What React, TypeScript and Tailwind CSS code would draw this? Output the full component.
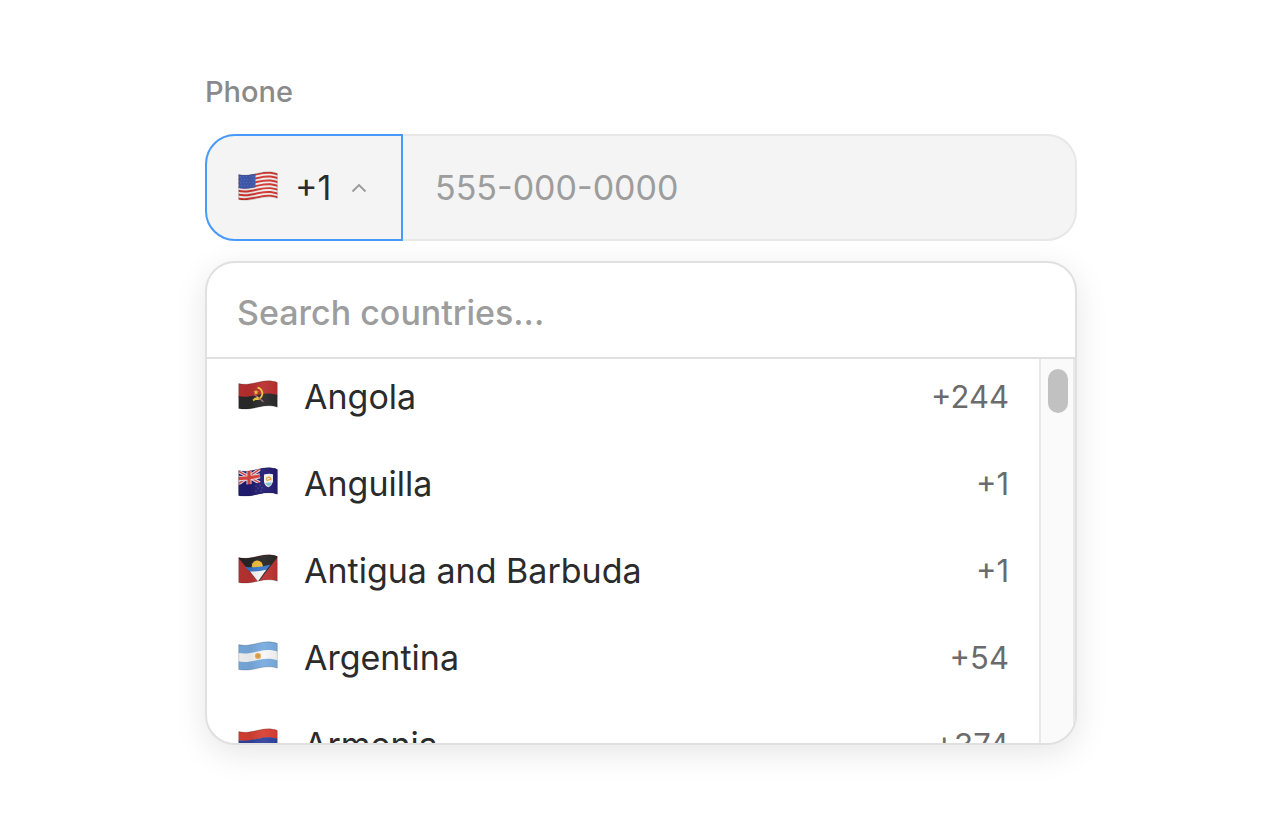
import { useId, type ReactNode } from "react";

type Code = "us" | "ao" | "ai" | "ag" | "ar" | "am";

const countries: { code: Code; name: string; dial: string }[] = [
  { code: "ao", name: "Angola", dial: "+244" },
  { code: "ai", name: "Anguilla", dial: "+1" },
  { code: "ag", name: "Antigua and Barbuda", dial: "+1" },
  { code: "ar", name: "Argentina", dial: "+54" },
  { code: "am", name: "Armenia", dial: "+374" },
];

const outline =
  "M.7 3.6C7 5.2 14 3.6 21 2S34 .4 39.3 2.4V27.2C34 25.3 28 25.3 21 27S7 29.9 .7 28.5Z";

/** A horizontal band whose top edge follows the wave of the cloth. */
function Band({ y, h, fill, to = 40 }: { y: number; h: number; fill: string; to?: number }) {
  if (to < 40) {
    return <path d={`M0 ${y + 3.5}C6 ${y + 5} 12 ${y + 4} 17.5 ${y + 2.8}v${h}C12 ${y + h + 4} 6 ${y + h + 5} 0 ${y + h + 3.5}Z`} fill={fill} />;
  }
  return (
    <path
      d={`M0 ${y + 3.5}C7 ${y + 5.2} 14 ${y + 3.6} 21 ${y + 2}S34 ${y + 0.4} 40 ${y + 2.6}v${h}C34 ${y + h + 0.4} 28 ${y + h + 0.4} 21 ${y + h + 2}S7 ${y + h + 5.2} 0 ${y + h + 3.5}Z`}
      fill={fill}
    />
  );
}

const art: Record<Code, ReactNode> = {
  us: (
    <>
      <Band y={-2} h={30} fill="#f1eeee" />
      {[0, 1, 2, 3, 4, 5, 6].map((i) => (
        <Band key={i} y={i * 3.84 - 0.1} h={1.95} fill="#d3352f" />
      ))}
      <Band y={-1} h={14.4} to={17} fill="#3f5cb0" />
      {[0, 1, 2, 3].map((r) =>
        [0, 1, 2, 3, 4].map((c) => (
          <circle key={`${r}-${c}`} cx={2.6 + c * 3.1 + (r % 2)} cy={6 + r * 2.9 - c * 0.15} r=".4" fill="#8ba2d8" />
        )),
      )}
    </>
  ),
  ao: (
    <>
      <Band y={-3} h={17} fill="#b9302f" />
      <Band y={12.6} h={18} fill="#2b2a2b" />
      <path d="M19.5 7.6c4.8.7 6.4 6.8 3 10.2-1.5 1.5-4 1.7-6.2.6" fill="none" stroke="#f0c83c" strokeWidth="1.8" />
      <path d="M16.5 14.5 25.4 21.8" stroke="#b5686d" strokeWidth="1.4" />
      <path d="m15 20.3 5.4-3" stroke="#f0c83c" strokeWidth="1.9" />
      <path d="m18 9.5.7 1.8 1.9.1-1.5 1.3.5 1.9-1.6-1-1.6 1 .5-1.9-1.5-1.3 1.9-.1z" fill="#f0c83c" />
    </>
  ),
  ai: (
    <>
      <Band y={-3} h={34} fill="#231c72" />
      <path d="M0 4 22 16M22 2 0 17" stroke="#e6ddea" strokeWidth="3.4" />
      <path d="M0 4 22 16M22 2 0 17" stroke="#d9433f" strokeWidth="1.4" />
      <path d="M11 2v16M0 11.3Q9 12 22 8.8" fill="none" stroke="#eee6ef" strokeWidth="5" />
      <path d="M11 2v16M0 11.3Q9 12 22 8.8" fill="none" stroke="#df443e" strokeWidth="3.2" />
      <path d="M0 17.4Q10 18.4 22.5 15.6V0H40V32H0z" fill="#231c72" />
      <path d="M26 7.6q5-1.5 9-.4v7q-1 4.5-4.5 6-3.8-1.3-4.5-5.5z" fill="#f3f1ec" />
      <path d="M27.2 16q3.2-1 6.8-.2-1.1 2.5-3.5 3.5-2.6-1.3-3.3-3.3z" fill="#80c4dc" />
      <path d="M28.5 13.5q-.4-3 2-3.3 2.5 0 2.4 3M29 13.8l3.4-1.8" fill="none" stroke="#e8a84c" strokeWidth="1.3" />
      <g fill="#537fae">
        <circle cx="18" cy="19" r=".6" /><circle cx="22" cy="18" r=".6" />
        <circle cx="20" cy="21" r=".6" /><circle cx="24" cy="20.8" r=".6" />
        <circle cx="18" cy="24" r=".6" /><circle cx="23" cy="24" r=".6" />
      </g>
    </>
  ),
  ag: (
    <>
      <Band y={-3} h={34} fill="#b93332" />
      <path d="M0 3.4Q9 5.3 21 2T40 2.4L20.5 28z" fill="#282627" />
      <path d="m13 12.4 1.4-1.2-.8-1.9 1.9.1.2-2.1 1.8 1 1-1.7 1.2 1.6 1.7-.9.3 1.9 2-.2-.7 2 1.9 1z" fill="#efbd38" />
      <circle cx="19.4" cy="12" r="5.4" fill="#efbd38" />
      <path d="M7 12.8Q19 14.5 32.5 10.5L27 18Q20 19 12.3 18z" fill="#3977ca" />
      <path d="M12 17.4Q20 17.8 28.2 15.8L20 27.5z" fill="#f7f5f5" />
    </>
  ),
  ar: (
    <>
      <Band y={-3} h={12} fill="#79ace0" />
      <Band y={8.2} h={9} fill="#f6f6f6" />
      <Band y={16.8} h={14} fill="#79ace0" />
      <circle cx="20" cy="14.9" r="3" fill="#e5a947" />
      <circle cx="20" cy="14.9" r="1.3" fill="#d39055" />
    </>
  ),
  am: (
    <>
      <Band y={-3} h={11.8} fill="#d64032" />
      <Band y={8.4} h={9} fill="#30429e" />
      <Band y={17} h={14} fill="#eda436" />
    </>
  ),
};

function Flag({ code }: { code: Code }) {
  const id = useId();
  return (
    <svg viewBox="0 0 40 34" className="h-[34px] w-10 shrink-0" aria-hidden="true">
      <defs>
        <clipPath id={id}>
          <path d={outline} />
        </clipPath>
        <linearGradient id={`${id}s`} x1="0" x2="1">
          <stop offset="0" stopColor="#000" stopOpacity=".04" />
          <stop offset=".3" stopColor="#000" stopOpacity=".07" />
          <stop offset=".65" stopColor="#fff" stopOpacity=".05" />
          <stop offset="1" stopColor="#000" stopOpacity=".05" />
        </linearGradient>
      </defs>
      <g clipPath={`url(#${id})`}>
        {art[code]}
        <rect width="40" height="30" fill={`url(#${id}s)`} />
      </g>
      <path d={outline} fill="none" stroke="#000" strokeOpacity=".22" strokeWidth=".8" />
    </svg>
  );
}

export default function App() {
  return (
    <main className="min-h-screen bg-white pt-[72px] pb-10 pl-1 font-['Inter','Liberation_Sans',sans-serif] text-[#2b2b2b]">
      <div className="mx-auto w-full max-w-[872px]">
        <label htmlFor="phone" className="block text-[29px] leading-10 font-medium text-[#8a8a8a]">
          Phone
        </label>

        <div className="mt-[22px] flex h-[107px] rounded-[30px] bg-[#f4f4f4]">
          <button
            type="button"
            aria-expanded="true"
            aria-label="Country code +1"
            className="flex w-[198px] shrink-0 items-center rounded-l-[30px] border-2 border-[#4799fb] pl-[31px] text-[34px]"
          >
            <Flag code="us" />
            <span className="ml-[17px]">+1</span>
            <svg viewBox="0 0 16 10" className="ml-5 h-[10px] w-4" fill="none" stroke="#999" strokeWidth="1.8" aria-hidden="true">
              <path d="M1.5 8.5 8 2l6.5 6.5" />
            </svg>
          </button>
          <input
            id="phone"
            type="tel"
            placeholder="555-000-0000"
            className="min-w-0 flex-1 rounded-r-[30px] border-2 border-l-0 border-[#e8e8e8] bg-transparent px-8 text-[34px] outline-none placeholder:text-[#9d9d9d]"
          />
        </div>

        <div className="mt-5 overflow-hidden rounded-[30px] border-2 border-[#e0e0e0] bg-white shadow-[0_8px_32px_rgba(0,0,0,0.1)]">
          <input
            type="search"
            aria-label="Search countries"
            placeholder="Search countries..."
            className="block h-24 w-full border-b-2 border-[#e0e0e0] px-[30px] pt-1 text-[34px] font-medium outline-none placeholder:text-[#9d9d9d]"
          />
          <div className="flex h-96 overflow-hidden">
            <ul className="-mt-1.5 min-w-0 flex-1">
              {countries.map((c) => (
                <li key={c.code}>
                  <button type="button" className="flex h-[87px] w-full items-center pr-[30px] pl-[31px] text-left">
                    <Flag code={c.code} />
                    <span className="ml-[26px] flex-1 truncate text-[34px] leading-[48px]">{c.name}</span>
                    <span className="pt-0.5 text-[31px] text-[#6b6b6b]">{c.dial}</span>
                  </button>
                </li>
              ))}
            </ul>
            <div className="flex w-9 justify-end border-x-2 border-[#e8e8e8] bg-[#fafafa] pt-[10px] pr-[5px]">
              <div className="h-11 w-5 rounded-full bg-[#c1c1c1]" />
            </div>
          </div>
        </div>
      </div>
    </main>
  );
}
